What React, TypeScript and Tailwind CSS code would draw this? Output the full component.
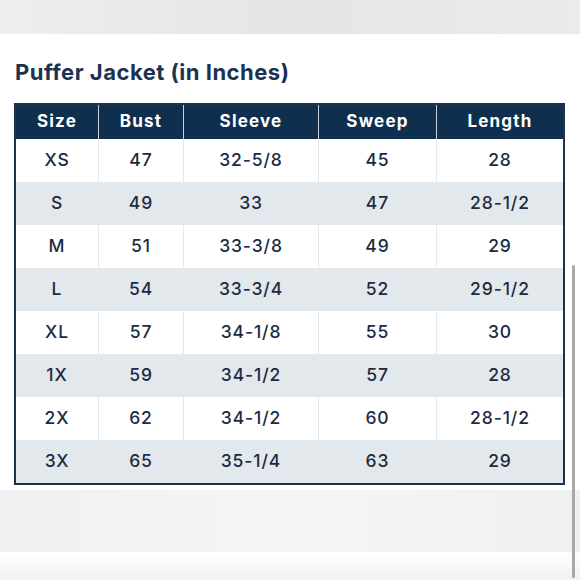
const headers = ["Size", "Bust", "Sleeve", "Sweep", "Length"];

const rows = [
  ["XS", "47", "32-5/8", "45", "28"],
  ["S", "49", "33", "47", "28-1/2"],
  ["M", "51", "33-3/8", "49", "29"],
  ["L", "54", "33-3/4", "52", "29-1/2"],
  ["XL", "57", "34-1/8", "55", "30"],
  ["1X", "59", "34-1/2", "57", "28"],
  ["2X", "62", "34-1/2", "60", "28-1/2"],
  ["3X", "65", "35-1/4", "63", "29"],
];

const cols = "grid grid-cols-[82px_85px_135px_118px_1fr]";

export default function App() {
  return (
    <div
      className="relative w-[580px] h-[580px] overflow-hidden bg-white flex flex-col"
      style={{ fontFamily: "Inter, 'Open Sans', sans-serif" }}
    >
      {/* top band */}
      <div className="h-[34px] shrink-0 bg-gradient-to-r from-[#eeeef0] via-[#e4e5e7] to-[#eaebed]" />

      <div className="h-[456px] shrink-0 pl-[14px] pr-[15px] pt-[24px]">
        <h1 className="text-[22px] leading-[28px] font-bold text-[#1b3350] pl-[1px] tracking-[0.5px]">
          Puffer Jacket (in Inches)
        </h1>

        {/* size table */}
        <div className="mt-[17px] border-2 border-[#1b3350] text-[#1c2b3f]">
          <div className={`${cols} h-[34px] bg-[#0f2f4f] text-white text-[17px] font-bold tracking-[1.2px]`}>
            {headers.map((h, i) => (
              <div
                key={h}
                className={`flex items-center justify-center ${i > 0 ? "border-l border-[#c9d2dc]" : ""}`}
              >
                {h}
              </div>
            ))}
          </div>
          {rows.map((r, ri) => (
            <div
              key={r[0]}
              className={`${cols} h-[43px] text-[17.5px] font-medium tracking-[0.9px] ${ri % 2 ? "bg-[#e3e8ec]" : "bg-white"}`}
            >
              {r.map((c, ci) => (
                <div
                  key={ci}
                  className={`flex items-center justify-center ${ci > 0 ? "border-l border-[#e6e9ec]" : ""}`}
                >
                  {c}
                </div>
              ))}
            </div>
          ))}
        </div>
      </div>

      {/* bottom bands */}
      <div className="h-[62px] shrink-0 bg-gradient-to-r from-[#eef0f2] via-[#f4f5f6] to-[#eef0f1]" />
      <div className="flex-1 bg-gradient-to-b from-white to-[#f1f2f3]" />

      {/* scrollbar */}
      <div className="absolute left-[572px] top-[265px] w-[3px] h-[313px] rounded-full bg-[#a8a8a8]" />
    </div>
  );
}
